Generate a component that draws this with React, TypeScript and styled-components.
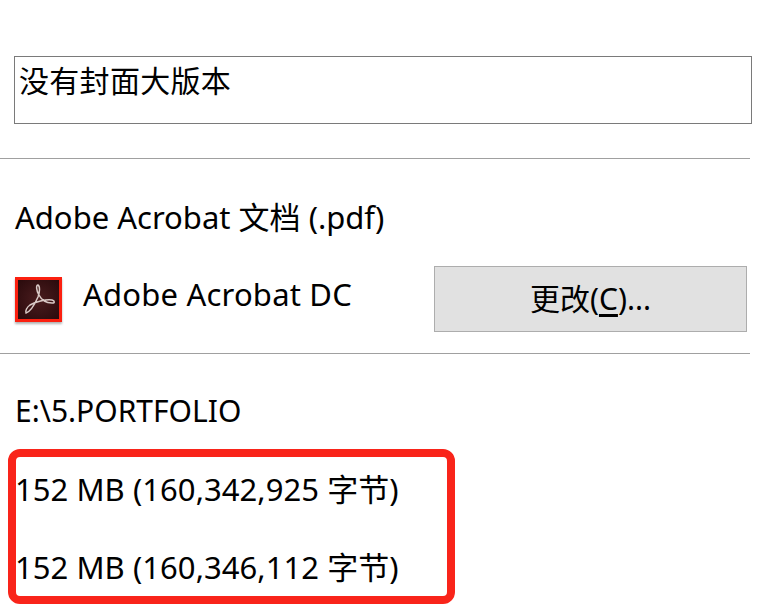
import React from 'react';
import styled, { createGlobalStyle } from 'styled-components';

const GlobalStyle = createGlobalStyle`
  html, body {
    margin: 0;
    padding: 0;
    background: #fff;
  }
  body {
    width: 769px;
    height: 613px;
    overflow: hidden;
    font-family: "Noto Sans", "Noto Sans CJK SC", sans-serif;
    color: #000;
  }
`;

const Page = styled.div`
  display: flex;
  flex-direction: column;
  padding-top: 56px;
`;

const NameBox = styled.div`
  box-sizing: border-box;
  width: 738px;
  height: 68px;
  margin-left: 14px;
  padding: 5px 0 0 4px;
  border: 1px solid #7a7a7a;
  font-size: 30px;
  line-height: 38px;
  letter-spacing: 0.3px;
`;

const Divider = styled.div<{ $top: number }>`
  width: 750px;
  height: 1px;
  margin-top: ${(p) => p.$top}px;
  background: #a0a0a0;
`;

const Line = styled.div<{ $top: number; $size?: number }>`
  margin: ${(p) => p.$top}px 0 0 15px;
  font-size: ${(p) => p.$size ?? 31}px;
  line-height: 38px;
  white-space: nowrap;
`;

const AppRow = styled.div`
  display: flex;
  align-items: center;
  margin: 30px 0 0 15px;
  height: 66px;
`;

const AppIcon = styled.svg`
  width: 47px;
  height: 45px;
  flex: none;
  filter: drop-shadow(0 2px 1px rgba(0, 0, 0, 0.3));
`;

const AppName = styled.div`
  width: 350px;
  margin-left: 21px;
  font-size: 31px;
  line-height: 38px;
  letter-spacing: 0.2px;
  padding-bottom: 10px;
  white-space: nowrap;
`;

const ChangeButton = styled.div`
  box-sizing: border-box;
  width: 313px;
  height: 66px;
  margin-left: 1px;
  padding-bottom: 4px;
  display: flex;
  align-items: center;
  justify-content: center;
  background: #e1e1e1;
  border: 1px solid #adadad;
  font-size: 30px;
`;

const Mnemonic = styled.span`
  text-decoration: underline;
  text-underline-offset: 4px;
`;

const SizeBox = styled.div`
  box-sizing: border-box;
  width: 447px;
  height: 155px;
  margin: 19px 0 0 8px;
  border: 8px solid #f9241a;
  border-radius: 12px;
  display: flex;
  flex-direction: column;
  gap: 40px;
  padding-top: 13px;
`;

const SizeLine = styled.div`
  margin-left: -1px;
  font-size: 31px;
  line-height: 38px;
  letter-spacing: 0.05px;
  white-space: nowrap;
`;

export default function App() {
  return (
    <Page>
      <GlobalStyle />
      <NameBox>没有封面大版本</NameBox>
      <Divider $top={34} />
      <Line $top={39}>Adobe Acrobat 文档 (.pdf)</Line>
      <AppRow>
        <AppIcon viewBox="0 0 47 45">
          <defs>
            <radialGradient id="acrobatBg" cx="50%" cy="50%" r="65%">
              <stop offset="0%" stopColor="#4a1c1e" />
              <stop offset="100%" stopColor="#2a0a0c" />
            </radialGradient>
          </defs>
          <rect x="1.5" y="1.5" width="44" height="42" fill="url(#acrobatBg)" stroke="#fb2010" strokeWidth="3" />
          <path
            d="M11 36c3-1 8-7 12-16 2-5 2-11 0-12-2 0-2 5 1 10 3 6 8 8 13 8 3 0 3-2 0-3-6-1-17 2-22 5-3 2-5 6-4 8z"
            fill="none"
            stroke="#d9c9c6"
            strokeWidth="1.5"
          />
        </AppIcon>
        <AppName>Adobe Acrobat DC</AppName>
        <ChangeButton>
          <span>
            更改(<Mnemonic>C</Mnemonic>)...
          </span>
        </ChangeButton>
      </AppRow>
      <Divider $top={21} />
      <Line $top={38} $size={30}>E:\5.PORTFOLIO</Line>
      <SizeBox>
        <SizeLine>152 MB (160,342,925 字节)</SizeLine>
        <SizeLine>152 MB (160,346,112 字节)</SizeLine>
      </SizeBox>
    </Page>
  );
}
